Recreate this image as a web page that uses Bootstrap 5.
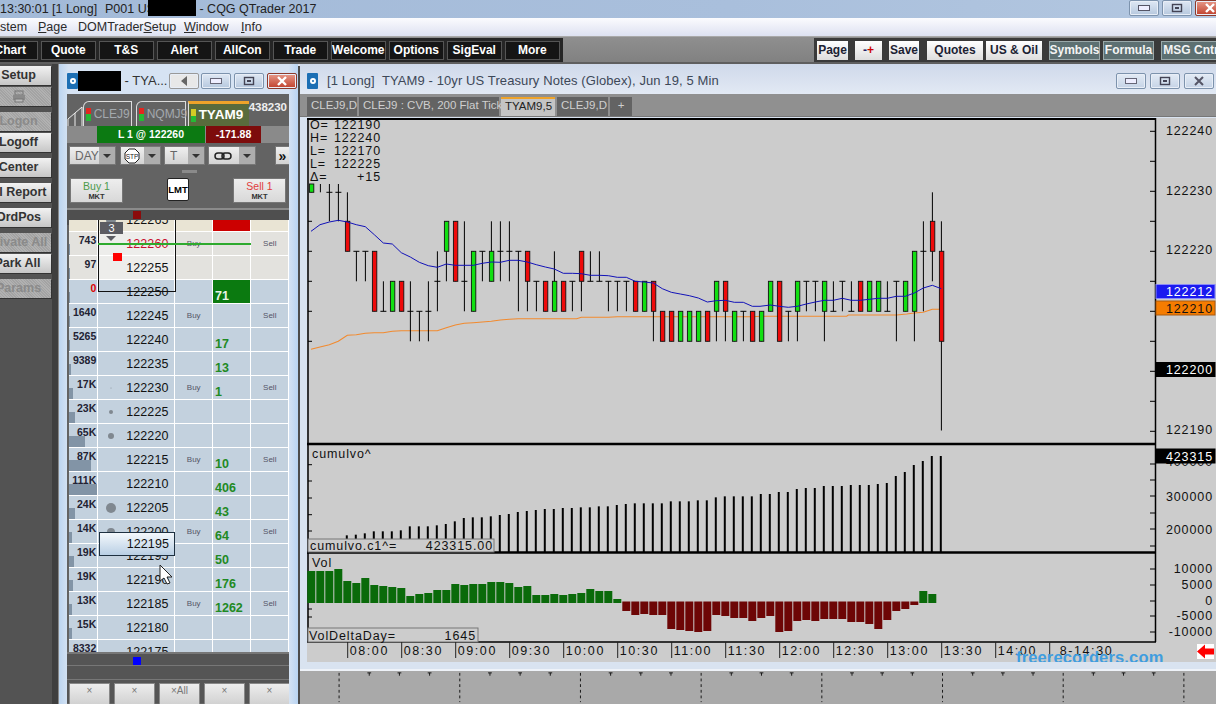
<!doctype html>
<html lang="en">
<head>
<meta charset="utf-8">
<title>CQG QTrader 2017</title>
<link href="https://cdn.jsdelivr.net/npm/bootstrap@5.3.0/dist/css/bootstrap.min.css" rel="stylesheet">
<style>
html,body{width:1216px;height:704px;overflow:hidden;margin:0;background:#4c4c4c;font-family:"Liberation Sans",Arial,sans-serif;color:#222}
.shell{width:1216px;height:704px;overflow:hidden}
.titlebar{height:18px;background:linear-gradient(90deg,#a3bad8,#a9bfdc 60%,#b3c7e0);font-size:12.5px;line-height:18px;white-space:nowrap;overflow:hidden}
.blackout{background:#000;display:inline-block}
.ttl-a{width:52px;padding-left:0}.ttl-b{width:53px}.ttl-c{width:43px}
.blk-top{width:48px;height:16px;margin-top:0}
.winbtn{width:30px;height:16px;border:1px solid #7d93ad;border-radius:2px;background:linear-gradient(#dfe8f4,#b6c8de);padding:0;display:flex;align-items:center;justify-content:center;box-shadow:inset 0 0 0 1px #e8eef7;flex:none}
.winbtn.close-red{background:linear-gradient(#e79a8a,#c0412d);border-color:#8d3a2c}
.topctl{margin-right:-9px;gap:3px}
.menubar{height:19px;background:linear-gradient(#fbfbfe,#dde1f1);border-bottom:1px solid #a9a9a9;font-size:12.5px;line-height:18px;white-space:nowrap;color:#2a2a2a}
.menubar span{position:relative}
.mi{text-decoration:underline;text-decoration-thickness:1px}
.toolbar{height:27px;background:linear-gradient(#8f8f8f,#818181);border-bottom:2px solid #5f5f5f;box-shadow:0 2px 0 #dfe4ee}
.tgroup{background:#2e2e2e;height:24px;margin-top:1px;gap:3.5px;padding:3px 3px 2px}
.tgroup-l{margin-left:-17px;width:580px;background:#262626;padding-left:0}
.tgroup-r{margin-left:auto;width:402px;gap:0;padding-left:3px;background:#3a3a3a}
.tb{width:54.5px;height:19px;padding:0;border:0;border-radius:0;background:#151515;color:#fff;font-weight:700;font-size:12px;line-height:19px;box-shadow:inset 0 0 0 1px #555;flex:none;text-align:center;font-family:"Liberation Sans",sans-serif}
.tb:hover{background:#151515;color:#fff}
.rb{height:19px;padding:0;border:0;border-radius:0;background:linear-gradient(#fff,#ddd);color:#1c2233;font-weight:700;font-size:12px;line-height:19px;flex:none;text-align:center}
.rb.slate{background:#5d7072;color:#f4f4f4;box-shadow:inset 0 0 0 1px #9aa9aa}
.main{height:640px;overflow:hidden}
.sidepanel{width:52px;background:#535353;flex:none;border-right:6px solid #3f3f3f;box-sizing:content-box;padding-top:2px}
.sb{display:block;width:65px;height:19px;margin-left:-14px;padding:0;border:0;border-radius:0;background:linear-gradient(#f2f2f2,#c6c6c6);color:#333;font-weight:700;font-size:12.5px;line-height:19px;text-align:center;box-shadow:1px 1px 0 #333;white-space:nowrap;overflow:hidden}
.sb.off{background:repeating-linear-gradient(45deg,#b1b1b1 0 1px,#a3a3a3 1px 2px);color:#8a8a8a}
.mt2px{margin-top:2px}.mt6px{margin-top:6px}
.domwin{width:240px;flex:none;background:linear-gradient(90deg,#bcd5f0,#d6e3f3 4%,#d6e3f3 96%,#b9d4f2);padding:0 9px 0 8px;border-left:1px solid #888;overflow:hidden}
.domhead{height:30px;padding-top:9px;font-size:13px;line-height:16px;color:#333;white-space:nowrap}
.appicon{width:11px;height:16px;background:#1c6fb4;border-radius:1px;flex:none;display:flex;align-items:center;justify-content:center}
.appicon i{display:block;width:6px;height:6px;border:2px solid #fff;border-radius:50%}
.blk-dom{width:43px;height:20px;margin-top:-2px;flex:none}
.domhead .winbtn{margin-left:2px}
.dombody{background:#636363;height:610px;overflow:hidden}
.tabrow{height:32px;white-space:nowrap;overflow:hidden;padding-top:7px}
.dt{height:25px;border:1px solid #ddd;border-bottom:0;border-radius:6px 0 0 0;font-size:12px;line-height:26px;color:#a3a9ae;flex:none;background:#636363;display:flex;align-items:center;padding-left:2px;gap:3px}
.dt.on{background:#596b3c;border-top:3px solid #eea32a;color:#fff;font-weight:700;font-size:13.5px;border-radius:0;border-left:1px solid #ddd;border-right:0;height:25px;margin-top:0;line-height:22px}
.lamp{width:5px;height:13px;background:linear-gradient(#e3261f 50%,#25b935 50%);display:block;flex:none}
.lamp.y{background:linear-gradient(#d5cb25 50%,#25b935 50%)}
.acct{margin-left:auto;font-size:11.5px;font-weight:700;color:#eee;padding-right:2px;align-self:flex-start;margin-top:-2px}
.posrow{height:17px;font-size:10.5px;font-weight:700;line-height:17px;color:#fff;text-align:center;background:#8a8a8a}
.pos-g{width:30px;flex:none}.pos-a{width:108px;background:#0c7a12;flex:none}.pos-b{width:55px;background:#7d0c0c;flex:none;margin-left:1px}
.ctlrow{height:20px;margin-top:3px;padding-left:2px;font-size:12px}
.ctl{height:19px;background:linear-gradient(#f0f0f0,#d2d2d2);display:flex;align-items:center;color:#666;padding-left:5px;position:relative;flex:none;border:1px solid #777;justify-content:space-between;padding-right:0}
.ctl b{width:16px;height:100%;background:#adadad;display:flex;align-items:center;justify-content:center}
.ctl b::after{content:"";border:4px solid transparent;border-top:4px solid #333;border-bottom:0}
.grip{height:12px;position:relative}
.grip::after{content:"";position:absolute;left:52%;top:4px;width:15px;height:3px;background:#8a8a8a}
.orderrow{height:26px;padding:0 3px}
.obtn{width:53px;height:25px;background:linear-gradient(#eee,#d8d8d8);border:1px solid #777;text-align:center;font-size:10.5px;line-height:11px;padding-top:2px;flex:none}
.obtn small{display:block;font-size:7.5px;line-height:9px;color:#333;font-weight:700}
.lmt{width:22px;height:23px;border:1px solid #222;background:#fff;color:#000;font-weight:700;font-size:9.5px;line-height:21px;text-align:center;border-radius:2px}
.markbar{height:17px;margin-top:4px;border-top:2px solid #8b8b8b;background:#4f4f4f;position:relative}
.mk{position:absolute;left:66px;top:1px;width:8px;height:8px}
.ladwrap{height:432px;overflow:hidden;margin:0 0 0 2px;position:relative;background:#c3d1de;margin-top:-5px}
.ladder{margin-top:-12px;display:grid;grid-template-columns:29.3px 77.2px 37.5px 38px 38.5px;grid-auto-rows:24px}
.c{border-right:1px solid #fff;border-bottom:1px solid #fff;position:relative;overflow:hidden}
.vol{font-size:10.5px;font-weight:700;color:#223;text-align:right;line-height:11px;padding:3px 1px 0 0;white-space:nowrap}
.vbar{position:absolute;left:0;bottom:0;height:11px;background:#8294a6}
.prc{font-size:12.5px;text-align:right;line-height:24px;color:#111;padding-right:6px;letter-spacing:.1px}
.act{font-size:8px;text-align:center;line-height:24px;color:#556}
.sv{font-size:12.5px;font-weight:700;color:#1f8a24;line-height:13px;padding:10px 0 0 2px}
.dot{position:absolute;left:13px;top:50%;background:#808890;border-radius:50%;transform:translate(-50%,-50%)}
.bx{position:absolute;left:29px;top:-12px;width:78px;height:84px;border:1px solid #111;pointer-events:none}
.gline{position:absolute;left:29px;top:23px;width:153px;height:2px;background:#2eaa2e}
.hov{position:absolute;left:30px;top:312px;width:76px;height:24px;border:1px solid #1e3040;background:linear-gradient(#f4f8fc,#b9cfe4);font-size:12.5px;line-height:23px;text-align:right;padding-right:5px;color:#111;letter-spacing:.1px}
.three{position:absolute;left:31px;top:2px;width:23px;height:12px;background:#5c5c62;color:#fff;font-size:11px;line-height:12px;text-align:center}
.tri{position:absolute;left:37px;top:16px;border:5.5px solid transparent;border-top:5px solid #5c5c62;border-bottom:0}
.rs{position:absolute;left:44px;top:33px;width:9px;height:8px;background:#f00}
.botbar{height:31px;background:#555;position:relative;border-top:2px solid #777}
.botbar hr{margin:0;border-color:#777;opacity:1;position:absolute;left:0;right:0}
.gbtnrow{height:20px;padding-left:2px;background:#555;gap:4px}
.xb{width:41px;height:24px;background:linear-gradient(#ededed,#cfcfcf);border:1px solid #888;text-align:center;color:#777;font-size:10px;line-height:14px;flex:none}
.cursor{position:absolute;left:159px;top:564px;z-index:5}
.rightcol{width:916px;flex:none;margin-left:2px;overflow:hidden}
.chartwin{height:605px;background:#d9e3f0;padding-left:7px}
.charthead{height:30px;background:linear-gradient(#cfd9ea,#e2e9f4);margin-left:-7px;padding:9px 2px 0 7px;font-size:13px;line-height:16px;color:#3d4858;white-space:nowrap}
.charthead .ttl{margin-left:9px;letter-spacing:.1px}
.charthead .winbtn{background:linear-gradient(#e3ebf5,#c5d3e6)}
.ctabs{height:22px;background:#909090;margin-left:-7px;padding:3px 0 0 7px;font-size:11.5px;line-height:17px;white-space:nowrap;box-shadow:0 1px 0 #777}
.ct{height:19px;background:#636363;color:#cfcfcf;padding:0 4px;border-left:0;margin-right:2px;flex:none;text-align:center}
.ct.on{background:#c4c4c4;color:#222;border-top:2px solid #eea32a;line-height:15px}
.cframe{height:544px;margin-top:2px;background:#ccc;display:block}
.cframe text{font-family:"Liberation Sans",Arial,sans-serif;font-size:12.5px;letter-spacing:.9px;fill:#111}
.strip{height:35px;background:#a9a9a9;display:block;border-top:2px solid #eef2f8}
</style>
</head>
<body>
<div class="shell d-flex flex-column position-relative">
  <div class="titlebar d-flex">
    <span class="ttl-a">13:30:01</span><span class="ttl-b">[1 Long]</span><span class="ttl-c">P001 US</span><span class="blackout blk-top"></span><span>&nbsp;- CQG QTrader 2017</span>
    <div class="d-flex topctl ms-auto">
      <button class="winbtn" aria-label="Minimize"><svg width="12" height="6"><rect x=".5" y=".5" width="11" height="5" fill="#eef" stroke="#556"/></svg></button>
      <button class="winbtn" aria-label="Maximize"><svg width="12" height="10"><rect x="1.5" y="1.5" width="9" height="7" fill="none" stroke="#445" stroke-width="1.4"/><rect x="4" y="4" width="4" height="2" fill="#445"/></svg></button>
      <button class="winbtn close-red" aria-label="Close"><svg width="12" height="10"><path d="M2 1l8 8M10 1l-8 8" stroke="#fff" stroke-width="2.4"/></svg></button>
    </div>
  </div>
  <div class="menubar d-flex">
    <span style="width:38px">stem</span><span style="width:40px"><span class="mi">P</span>age</span><span style="width:106px">DOMTrader<span class="mi">S</span>etup</span><span style="width:57px"><span class="mi">W</span>indow</span><span><span class="mi">I</span>nfo</span>
  </div>
  <div class="toolbar d-flex">
    <div class="tgroup tgroup-l d-flex" id="tl"></div>
    <div class="tgroup tgroup-r d-flex">
      <button class="rb" style="width:31px">Page</button>
      <button class="rb" style="width:27px;margin-left:7px"><span style="color:#226">-</span><span style="color:#c00">+</span></button>
      <button class="rb" style="width:30px;margin-left:7px">Save</button>
      <button class="rb" style="width:56px;margin-left:8px">Quotes</button>
      <button class="rb" style="width:56px;margin-left:3px">US &amp; Oil</button>
      <button class="rb slate" style="width:51px;margin-left:7px">Symbols</button>
      <button class="rb slate" style="width:51px;margin-left:3px">Formula</button>
      <button class="rb slate" style="width:60px;margin-left:7px">MSG Cntr</button>
    </div>
  </div>
  <div class="main d-flex">
    <aside class="sidepanel">
      <button class="sb">Setup</button>
      <button class="sb off mt2px"><svg width="14" height="13"><rect x="3" y="1" width="8" height="4" fill="none" stroke="#777"/><rect x="1" y="5" width="12" height="5" fill="#8a8a8a"/><rect x="3" y="9" width="8" height="3" fill="#bbb" stroke="#777"/></svg></button>
      <button class="sb off mt6px">Logon</button>
      <button class="sb mt2px">Logoff</button>
      <button class="sb mt6px">Center</button>
      <button class="sb mt6px" style="text-indent:-10px">Full Report</button>
      <button class="sb mt6px">OrdPos</button>
      <button class="sb off mt6px" style="text-indent:-10px">Activate All</button>
      <button class="sb mt2px" style="text-indent:-2px">Park All</button>
      <button class="sb off mt6px">Params</button>
    </aside>
    <section class="domwin">
      <div class="domhead d-flex">
        <span class="appicon"><i></i></span><span class="blackout blk-dom"></span><span>&nbsp;- TYA...</span>
        <button class="winbtn" style="background:#e8e8e8;border-color:#999" aria-label="Sound"><svg width="12" height="12"><path d="M9 1L3 6l6 5zM7 3v6" fill="#666"/></svg></button>
        <button class="winbtn" aria-label="Minimize"><svg width="12" height="6"><rect x=".5" y=".5" width="11" height="5" fill="#eef" stroke="#667"/></svg></button>
        <button class="winbtn" style="margin-left:3px" aria-label="Maximize"><svg width="12" height="10"><rect x="1.5" y="1.5" width="9" height="7" fill="none" stroke="#445" stroke-width="1.4"/><rect x="4" y="4" width="4" height="2" fill="#445"/></svg></button>
        <button class="winbtn close-red" style="margin-left:3px" aria-label="Close"><svg width="12" height="10"><path d="M2 1l8 8M10 1l-8 8" stroke="#fff" stroke-width="2.4"/></svg></button>
      </div>
      <div class="dombody">
        <div class="tabrow d-flex">
          <svg width="17" height="25" class="flex-none"><path d="M1 25V18L8 12V25M8 12L15 6V25" fill="none" stroke="#eee"/></svg>
          <div class="dt" style="width:49px"><span class="lamp"></span>CLEJ9</div>
          <div class="dt ms-1" style="width:50px"><span class="lamp"></span>NQMJ9</div>
          <div class="dt on" style="width:61px;margin-left:2px"><span class="lamp y"></span>TYAM9</div>
          <div class="acct">438230</div>
        </div>
        <div class="posrow d-flex"><span class="pos-g"></span><span class="pos-a">L 1 @ 122260</span><span class="pos-b">-171.88</span></div>
        <div class="ctlrow d-flex">
          <div class="ctl" style="width:47px">DAY<b></b></div>
          <div class="ctl" style="width:41px;margin-left:4px;padding-left:2px"><svg width="18" height="18"><path d="M6 2h6l4 4v6l-4 4H6l-4-4V6z" fill="#fff" stroke="#222"/><text x="9" y="11.5" text-anchor="middle" font-size="6.5" font-family="Liberation Sans" fill="#222">STP</text></svg><b></b></div>
          <div class="ctl" style="width:41px;margin-left:3px">T<b></b></div>
          <div class="ctl" style="width:48px;margin-left:3px"><svg width="18" height="10"><rect x="1" y="2" width="9" height="6" rx="3" fill="none" stroke="#222" stroke-width="1.5"/><rect x="8" y="2" width="9" height="6" rx="3" fill="none" stroke="#222" stroke-width="1.5"/></svg><b></b></div>
          <div class="ctl" style="width:15px;margin-left:19px;padding:0;justify-content:center;color:#111;font-weight:700;font-size:14px;line-height:14px">»</div>
        </div>
        <div class="grip"></div>
        <div class="orderrow d-flex justify-content-between align-items-start">
          <div class="obtn"><span style="color:#4c9a4c">Buy 1</span><small>MKT</small></div>
          <div class="lmt">LMT</div>
          <div class="obtn"><span style="color:#e23c3c">Sell 1</span><small>MKT</small></div>
        </div>
        <div class="markbar"><span class="mk" style="background:#8b0b0b"></span></div>
        <div class="ladwrap">
          <div class="ladder" id="lad"></div>
          <div class="bx"></div><div class="gline"></div>
          <div class="three">3</div><div class="tri"></div><div class="rs"></div>
          <div class="hov">122195</div>
        </div>
        <div class="botbar"><span class="mk" style="background:#00f;top:3px"></span><hr style="top:11px"><hr style="top:25px"></div>
        <div class="gbtnrow d-flex">
          <div class="xb">×</div><div class="xb">×</div><div class="xb">×All</div><div class="xb">×</div><div class="xb">×</div>
        </div>
      </div>
    </section>
    <section class="rightcol">
      <div class="chartwin">
        <div class="charthead d-flex">
          <span class="appicon"><i></i></span><span class="ttl flex-grow-1">[1 Long]&nbsp; TYAM9 - 10yr US Treasury Notes (Globex), Jun 19, 5 Min</span>
          <div class="d-flex gap-1">
            <button class="winbtn" aria-label="Minimize"><svg width="12" height="6"><rect x=".5" y=".5" width="11" height="5" fill="#eef" stroke="#667"/></svg></button>
            <button class="winbtn" aria-label="Maximize"><svg width="12" height="10"><rect x="1.5" y="1.5" width="9" height="7" fill="none" stroke="#445" stroke-width="1.4"/><rect x="4" y="4" width="4" height="2" fill="#445"/></svg></button>
            <button class="winbtn" aria-label="Close"><svg width="12" height="10"><path d="M2 1l8 8M10 1l-8 8" stroke="#556" stroke-width="2"/></svg></button>
          </div>
        </div>
        <div class="ctabs d-flex">
          <div class="ct" style="width:50px">CLEJ9,D</div>
          <div class="ct" style="width:140px">CLEJ9 : CVB, 200 Flat Ticks</div>
          <div class="ct on" style="width:54px">TYAM9,5</div>
          <div class="ct" style="width:51px">CLEJ9,D</div>
          <div class="ct" style="width:22px">+</div>
        </div>
        <svg class="cframe" id="chart" width="909" height="544" viewBox="307 120 909 544" role="img" aria-label="TYAM9 5 minute chart"></svg>
      </div>
      <svg class="strip" id="strip" width="916" height="35" viewBox="300 671 916 35" aria-hidden="true"></svg>
    </section>
  </div>
  <svg class="cursor" width="14" height="22" aria-hidden="true"><path d="M1 1v16l4-3 3 6 3-1-3-6h5z" fill="#fff" stroke="#222"/></svg>
</div>
<script src="https://cdn.jsdelivr.net/npm/bootstrap@5.3.0/dist/js/bootstrap.bundle.min.js"></script>
<script>
// toolbar
document.getElementById('tl').innerHTML=['Chart','Quote','T&amp;S','Alert','AllCon','Trade','Welcome','Options','SigEval','More'].map(t=>'<button class="tb">'+t+'</button>').join('');
// ladder
const L=[
['',122265,'','','','',{bg:'#e9e4d4',dot:10,red:1}],
['743',122260,'Buy','','Sell',1,{bg:'#e3e2de',pb:'#ededeb',col:'#c8102e'}],
['97',122255,'','','',1,{bg:'#e3e2de',pb:'#ededeb'}],
['0',122250,'','71','',1,{col0:'#d00',grn:1}],
['1640',122245,'Buy','','Sell',1],
['5265',122240,'','17','',1],
['9389',122235,'','13','',2],
['17K',122230,'Buy','1','Sell',4,{dot:1}],
['23K',122225,'','','',6,{dot:4}],
['65K',122220,'','','',16,{dot:6}],
['87K',122215,'Buy','10','Sell',22],
['111K',122210,'','406','',29],
['24K',122205,'','43','',6,{dot:10}],
['14K',122200,'Buy','64','Sell',3,{dot:8}],
['19K',122195,'','50','',5],
['19K',122190,'','176','',4],
['13K',122185,'Buy','1262','Sell',3],
['15K',122180,'','','',3],
['8332',122175,'','','',2]];
document.getElementById('lad').innerHTML=L.map(r=>{
 const o=r[6]||{},bg=o.bg?`background:${o.bg}`:'';
 const vb=r[5]?`<span class="vbar" style="width:${r[5]}px"></span>`:'';
 const vs=o.col0?`color:${o.col0}`:'';
 return `<div class="c vol" style="${bg}">${vb}<span class="position-relative" style="${vs}">${r[0]}</span></div>`+
 `<div class="c prc" style="${o.pb?'background:'+o.pb:bg};${o.col?'color:'+o.col:''}">${o.dot?`<span class="dot" style="width:${o.dot}px;height:${o.dot}px"></span>`:''}${r[1]}</div>`+
 `<div class="c act" style="${bg}">${r[2]}</div>`+
 `<div class="c sv" style="${bg}${o.red?';background:#cc0000':''}${o.grn?';background:#0b7a10;color:#e8f4e8':''}">${r[3]}</div>`+
 `<div class="c act" style="${bg}">${r[4]}</div>`;
}).join('');
// chart
const Y={T:186,A:194.3,B:223.3,C:253.3,D:283.3,E:313.3,F:343.3,Z:432.5};
// hi,lo,bodyTop,bodyBot,color,tick
const C=[
'TATAg','TA','TE_C','TE_C','',''];
const raw=[
['T','A','T','A','g'],['T','A'],['T','B','','','','A'],['T','B','','','','A'],['A','C','B','C','r'],
['C','D','','','','C'],['C','D','','','','C'],['C','E','C','E','r'],['D','E','','','','E'],['D','E','D','E','g'],
['D','E','D','E','r'],['D','F','','','','E'],['E','F','','','','E'],['D','F','','','','E'],['C','E','','','','D'],
['B','D','B','C','g'],['B','D','B','D','r'],['B','E','','','','D'],['C','E','C','E','g'],['C','D','','','','C'],
['B','D','C','D','g'],['B','D','','','','C'],['B','D','','','','C'],['C','E','','','','C'],['C','E','C','D','r'],
['D','E','','','','D'],['D','E','D','E','r'],['C','E','D','E','g'],['D','E','D','E','r'],['D','E','','','','D'],
['C','E','C','D','r'],['C','D','','','','D'],['C','D','','','','D'],['D','E','','','','D'],['D','E','','','','D'],
['D','E','','','','D'],['D','E','D','E','r'],['D','E','D','E','g'],['D','F','D','E','r'],['E','F','E','F','r'],
['E','F','E','F','r'],['E','F','E','F','g'],['E','F','E','F','g'],['E','F','E','F','g'],['E','F','E','F','r'],
['D','F','D','E','g'],['D','F','D','E','r'],['E','F','E','F','g'],['E','F','','','','E'],['E','F','E','F','r'],
['E','F','E','F','g'],['D','E','D','E','g'],['D','F','D','F','r'],['E','F','','','','E'],['D','F','D','E','g'],
['D','E','','','','D'],['D','E','','','','D'],['D','F','D','E','g'],['D','E','','','','E'],['D','E','','','','D'],
['D','E','','','','E'],['D','E','D','E','r'],['D','E','D','E','g'],['D','E','D','E','g'],['D','E','','','','E'],
['D','F','','','','D'],['D','E','D','E','g'],['C','F','C','E','g'],['B','E','','','','C'],['A','D','B','C','r'],
['B','Z','C','F','r']];
let s='';
const X=i=>311.4+i*9;
// frame lines
const ln=(a,b,c,d,w=1,col='#000')=>`<line x1="${a}" y1="${b}" x2="${c}" y2="${d}" stroke="${col}" stroke-width="${w}"/>`;
const tx=(x,y,t,extra='')=>`<text x="${x}" y="${y}" ${extra}>${t}</text>`;
s+=ln(307,121,1156,121,2)+ln(308,120,308,644,1.5)+ln(1155.5,120,1155.5,644,1.5)+ln(307,446,1156,446,2.5)+ln(307,554.5,1156,554.5,2.5)+ln(307,644,1156,644,1.5);
// left & right ticks
[223.3,253.3,283.3,313.3,343.3].forEach(y=>s+=ln(308,y,312,y));
[133.3,163.3,193.3,223.3,253.3,283.3,313.3,343.3,373.3,403.3,433.3].forEach(y=>s+=ln(1150,y,1155,y));
[466.7,483,500,516.7,533].forEach(y=>s+=ln(308,y,312,y));
[466,482,498,515,531,548].forEach(y=>s+=ln(1150,y,1155,y));
[571,587,603,618,634].forEach(y=>s+=ln(1150,y,1155,y));
[611,619].forEach(y=>s+=ln(308,y,312,y));
// indicator lines
const b1=[[33,370],[60,350],[88,342],[115,337],[142,342],[169,350],[196,356],[223,380],[250,405],[277,408],[304,434],[331,447],[358,463],[385,473],[412,478],[439,468],[466,472],[520,472],[547,466],[574,462],[601,463],[628,457],[655,457],[682,462],[709,470],[736,477],[763,483],[790,496],[817,496],[844,497],[871,502],[898,502],[925,503],[952,508],[979,508],[1006,520],[1033,522],[1060,525],[1087,542],[1114,553],[1141,558],[1168,563],[1195,570],[1222,582],[1249,578],[1276,577],[1303,583],[1330,583],[1357,595]].map(p=>[300+p[0]/3,110+p[1]/3]);
const b2=[[0,385],[31,381],[58,385],[85,388],[112,385],[139,378],[166,372],[193,367],[220,367],[247,361],[274,367],[301,367],[328,364],[355,361],[382,361],[409,355],[436,355],[463,345],[490,330],[517,322],[544,332]].map(p=>[760+p[0]/3,180+p[1]/3]);
const o1=[[33,724],[60,717],[88,710],[115,700],[142,682],[169,680],[196,676],[223,674],[250,674],[277,670],[304,668],[412,668],[439,659],[466,651],[493,646],[520,644],[574,640],[601,636],[628,634],[655,632],[830,632],[844,628],[925,628],[952,626],[1360,626]].map(p=>[300+p[0]/3,110+p[1]/3]);
const o2=[[0,415],[260,415],[265,411],[410,411],[440,408],[463,405],[490,403],[517,394],[540,394]].map(p=>[760+p[0]/3,180+p[1]/3]);
const pts=a=>a.map(p=>p[0].toFixed(1)+','+p[1].toFixed(1)).join(' ');
s+=`<polyline points="${pts(o1.concat(o2))}" fill="none" stroke="#f28a2e" stroke-width="1.1"/>`;
// candles
raw.forEach((c,i)=>{const x=X(i);
 s+=ln(x,Y[c[0]],x,Y[c[1]],1);
 if(c[5]) s+=ln(x-3,Y[c[5]],x+3,Y[c[5]],1);
 if(c[2]){const t=Y[c[2]],b=Y[c[3]];s+=`<rect x="${x-2}" y="${t}" width="4.4" height="${b-t}" fill="${c[4]=='g'?'#12e012':'#ee0a0a'}" stroke="#111" stroke-width=".9"/>`;}
});
s+=`<polyline points="${pts(b1.concat(b2))}" fill="none" stroke="#1212b8" stroke-width="1"/>`;
// cumulative bars
const cum=[,,,,292,290,286,280,280,280,277,265,265,265,262,258,250,240,238,238,235,231,228,222,219,216,213,213,210,210,208,208,205,205,201,198,196,196,196,196,190,190,190,187,187,178,175,175,175,175,168,168,162,162,153,150,150,144,144,144,141,141,141,138,135,114,102,81,69,54,54];
cum.forEach((t,i)=>{if(t) s+=ln(X(i)-.6,440+t/3,X(i)-.6,554,2)});
// vol bars
const up=[399,399,399,393,429,435,420,441,444,447,450,474,468,465,456,456,438,441,438,438,432,432,435,447,444,471,471,468,471,468,465,453,459,459,483];
const dn=[519,531,528,531,531,573,576,579,582,579,531,534,540,540,549,540,534,582,579,549,546,549,543,543,543,552,552,558,573,546,519,513,501];
up.forEach((t,i)=>{const y=440+t/3;s+=`<rect x="${307.3+i*9}" y="${y}" width="8" height="${605-y}" fill="#0a6a0a"/>`});
dn.forEach((t,i)=>{const y=440+t/3;s+=`<rect x="${307.3+(35+i)*9}" y="603.5" width="8" height="${y-603.5}" fill="#6d0606"/>`});
[[68,459],[69,468]].forEach(p=>{const y=440+p[1]/3;s+=`<rect x="${307.3+p[0]*9}" y="${y}" width="8" height="${605-y}" fill="#0a6a0a"/>`});
// OHLC text
[['O=','122190'],['H=','122240'],['L=','122170'],['L=','122225'],['Δ=','+15']].forEach((r,i)=>{const y=131+i*13;s+=tx(310,y,r[0])+tx(381,y,r[1],'text-anchor="end"')});
// right axis
[[122240,137],[122230,197],[122220,256],[122190,436]].forEach(r=>s+=tx(1213,r[1],r[0],'text-anchor="end"'));
[['300000',503],['200000',536]].forEach(r=>s+=tx(1213,r[1],r[0],'text-anchor="end"'));
s+=tx(1213,468,'400000','text-anchor="end"');
[['10000',575],['5000',591],['0',607],['-5000',622],['-10000',638]].forEach(r=>s+=tx(1213,r[1],r[0],'text-anchor="end"'));
// price tags
[[286.5,14,'#1a1af0','#fff','122212','#8a8af8'],[303,14,'#f57c00','#111','122210','#a85a10'],[364.5,14,'#000','#fff','122200','#000'],[451,14,'#000','#fff','423315','#000']].forEach(t=>{
 s+=`<rect x="1156" y="${t[0]}" width="59" height="${t[1]}" fill="${t[2]}" stroke="${t[5]}"/>`;
 s+=tx(1213,t[0]+11.5,t[4],`text-anchor="end" style="fill:${t[3]}"`);
});
// pane labels
s+=tx(312,460,'cumulvo^');
s+=`<rect x="308" y="541" width="186" height="13" fill="#ccc" stroke="#777"/>`+tx(310,551.5,'cumulvo.c1^=')+tx(493,551.5,'423315.00','text-anchor="end"');
s+=tx(312,569,'Vol');
s+=`<rect x="308" y="630" width="170" height="14" fill="#ccc" stroke="#777"/>`+tx(309,641.5,'VolDeltaDay=')+tx(476,641.5,'1645','text-anchor="end"');
// time axis
['08:00','08:30','09:00','09:30','10:00','10:30','11:00','11:30','12:00','12:30','13:00','13:30','14:00','8-14:30'].forEach((t,i)=>{const x=347.7+i*54;
 s+=ln(x,644,x,660,1,'#222')+tx(x+(i==13?10:2),657,t,'style="letter-spacing:1.6px"');
});
// watermark + arrow
s+=`<text x="1016" y="665" style="font-size:16.5px;font-weight:700;fill:#3f9ddf;letter-spacing:.15px">freerecorders.com</text>`;
s+=`<rect x="1197" y="646" width="17" height="15" fill="#fff"/><path d="M1197 653.5l8-7v4h9v6h-9v4z" fill="#f00"/>`;
document.getElementById('chart').innerHTML=s;
// strip
let st='';
for(let x=313.7;x<1216;x+=32){const dash=Math.round((x-313.7)/32)%4==0;
 st+=dash?`<line x1="${x}" y1="673" x2="${x}" y2="704" stroke="#111" stroke-dasharray="3 3"/>`:`<path d="M${x-2} 673h4M${x} 673v3" stroke="#111"/>`;}
document.getElementById('strip').innerHTML=st;
</script>
</body>
</html>
